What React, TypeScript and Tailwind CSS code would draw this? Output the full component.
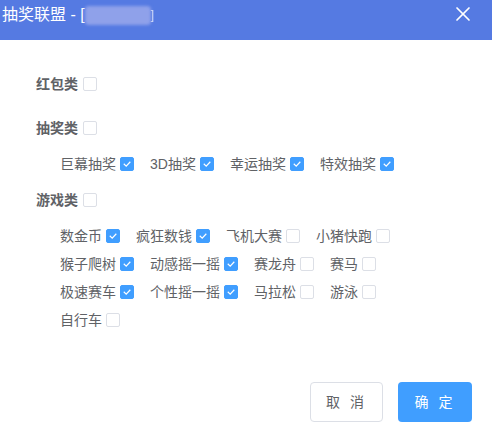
import { X } from 'lucide-react'

type Item = { name: string; checked: boolean }

const lottery: Item[] = [
  { name: '巨幕抽奖', checked: true },
  { name: '3D抽奖', checked: true },
  { name: '幸运抽奖', checked: true },
  { name: '特效抽奖', checked: true },
]

const games: Item[] = [
  { name: '数金币', checked: true },
  { name: '疯狂数钱', checked: true },
  { name: '飞机大赛', checked: false },
  { name: '小猪快跑', checked: false },
  { name: '猴子爬树', checked: true },
  { name: '动感摇一摇', checked: true },
  { name: '赛龙舟', checked: false },
  { name: '赛马', checked: false },
  { name: '极速赛车', checked: true },
  { name: '个性摇一摇', checked: true },
  { name: '马拉松', checked: false },
  { name: '游泳', checked: false },
  { name: '自行车', checked: false },
]

function Box({ checked }: { checked: boolean }) {
  return checked ? (
    <span className="w-[14px] h-[14px] rounded-[2px] bg-[#409eff] border border-[#409eff] flex items-center justify-center flex-shrink-0">
      <svg width="10" height="10" viewBox="0 0 10 10" fill="none">
        <path d="M2.2 5.2 L4.2 7.1 L7.9 3.2" stroke="white" strokeWidth="1.2" strokeLinecap="square" />
      </svg>
    </span>
  ) : (
    <span className="w-[14px] h-[14px] rounded-[2px] bg-white border border-[#dcdfe6] flex-shrink-0" />
  )
}

function Option({ item }: { item: Item }) {
  return (
    <label className="flex items-center gap-[4px] mr-[16px] text-[14px] text-[#606266] leading-5">
      <span>{item.name}</span>
      <Box checked={item.checked} />
    </label>
  )
}

function Group({ title }: { title: string }) {
  return (
    <div className="flex items-center gap-[5px] pl-[36px] h-5 text-[14px] font-bold text-[#606266]">
      <span>{title}</span>
      <Box checked={false} />
    </div>
  )
}

export default function App() {
  return (
    <div
      className="w-[492px] h-[442px] bg-white flex flex-col"
      style={{ fontFamily: '"Liberation Sans", "Noto Sans CJK SC", sans-serif' }}
    >
      {/* Header */}
      <header className="h-10 bg-[#557ae2] flex items-start justify-between pl-[2px] pr-[17px] pt-[5px] flex-shrink-0">
        <div className="flex items-center text-white text-[16px] leading-5">
          <span>抽奖联盟 - [</span>
          <span className="w-[66px] h-[19px] bg-[#8fa1ea] rounded-[4px] blur-[1.5px]" />
          <span className="text-[12px] opacity-70">]</span>
        </div>
        <X className="w-6 h-6 text-white -mt-[3px]" strokeWidth={1.7} />
      </header>

      {/* Body */}
      <main className="flex flex-col pt-[34px]">
        <Group title="红包类" />
        <div className="mt-6">
          <Group title="抽奖类" />
        </div>
        <div className="flex flex-wrap pl-[60px] mt-4">
          {lottery.map(i => (
            <Option key={i.name} item={i} />
          ))}
        </div>
        <div className="mt-4">
          <Group title="游戏类" />
        </div>
        <div className="flex flex-wrap pl-[60px] w-[440px] mt-3">
          {games.map(i => (
            <div key={i.name} className="h-7 flex items-center">
              <Option item={i} />
            </div>
          ))}
        </div>
      </main>

      {/* Footer */}
      <footer className="flex justify-end gap-[15px] pr-[20px] mt-[48px]">
        <button className="w-[73px] h-10 rounded-[4px] border border-[#dcdfe6] bg-white text-[14px] text-[#606266] tracking-[3px]">
          取 消
        </button>
        <button className="w-[74px] h-10 rounded-[4px] bg-[#409eff] text-[14px] text-white tracking-[3px]">
          确 定
        </button>
      </footer>
    </div>
  )
}
